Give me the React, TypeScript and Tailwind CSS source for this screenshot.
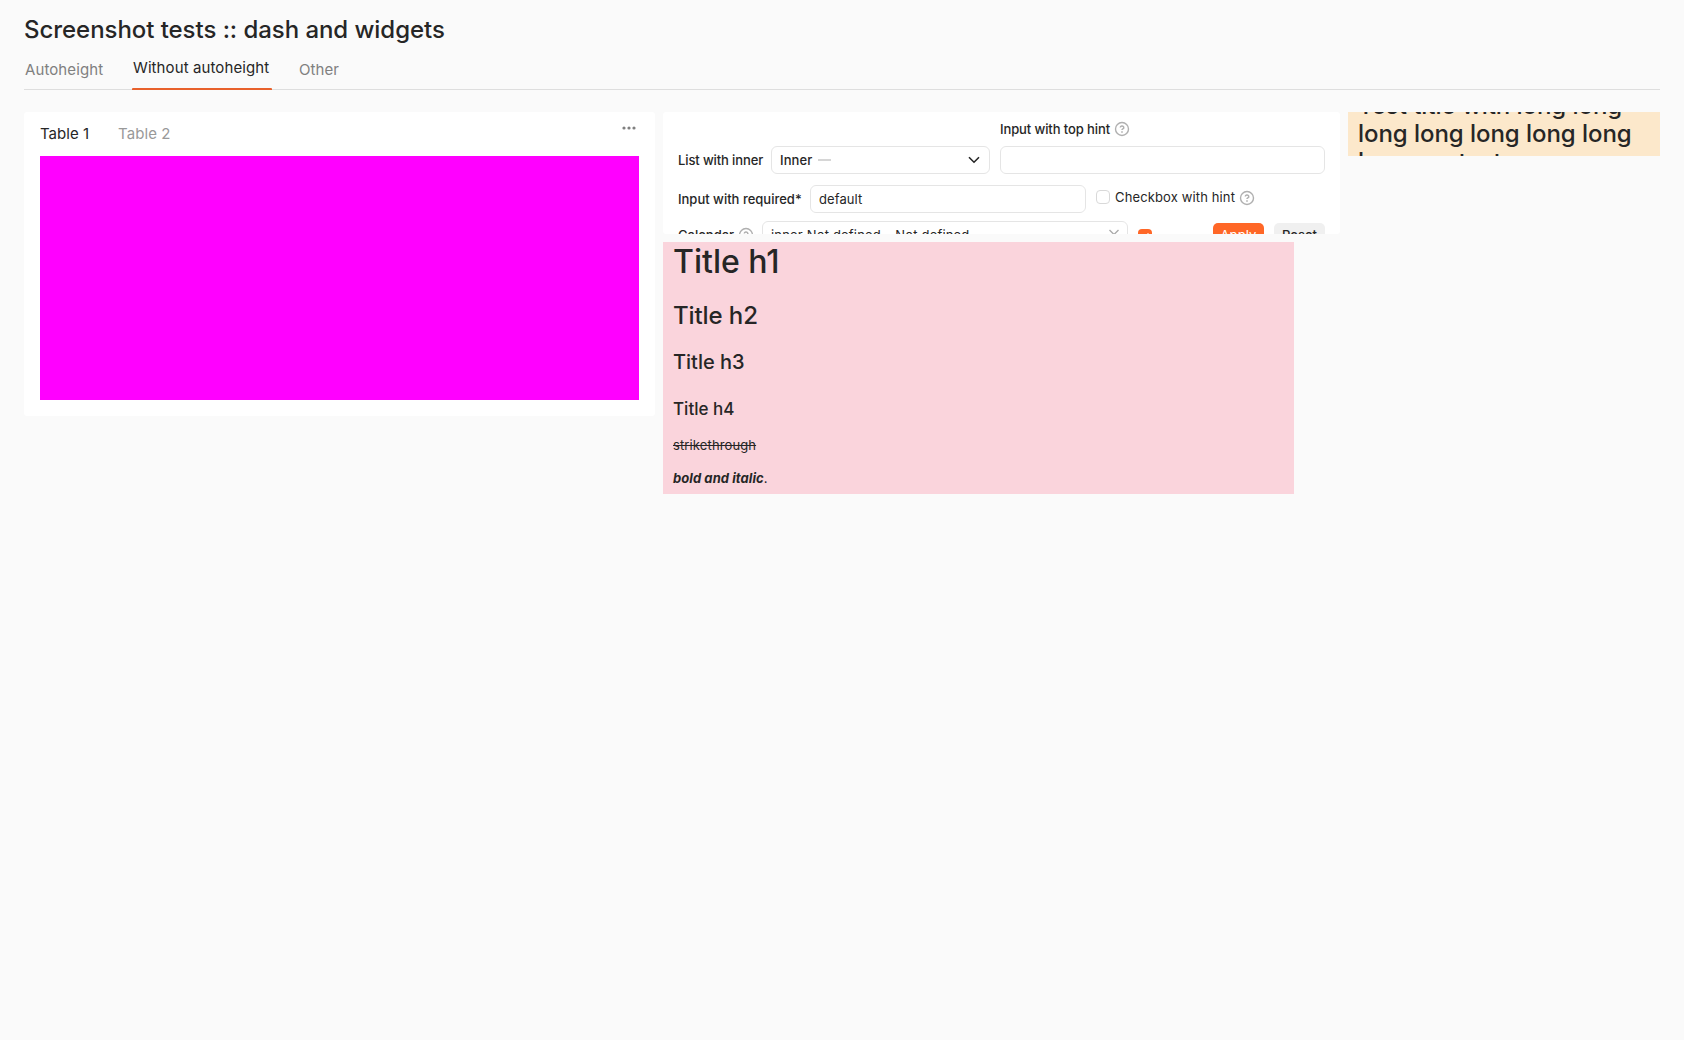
import React from 'react';

function Hint({ className = '' }: { className?: string }) {
  return (
    <svg className={`h-4 w-4 shrink-0 ${className}`} viewBox="0 0 16 16" fill="none" stroke="#b0b0b0" strokeWidth="1.4">
      <circle cx="8" cy="8" r="6.5" />
      <path d="M6.3 6.5a1.75 1.6 0 1 1 2.6 1.4c-.6.35-.9.6-.9 1.2" strokeWidth="1.5" />
      <path d="M8 10.3v1.4" strokeWidth="1.6" />
    </svg>
  );
}

function Chevron({ className = '' }: { className?: string }) {
  return (
    <svg className={`h-[14px] w-[14px] shrink-0 ${className}`} viewBox="0 0 14 14" fill="none" stroke="currentColor" strokeWidth="1.6">
      <path d="M2 4.2 7 9.2 12 4.2" />
    </svg>
  );
}

function TableCard() {
  return (
    <section className="h-[304px] w-[631px] shrink-0 rounded-[3px] bg-white px-4 pb-4">
      <div className="flex h-11 items-start text-[15px] leading-5">
        <span className="mt-3 w-[78px] tracking-[0.02px]">Table 1</span>
        <span className="mt-3 tracking-[0.08px] text-[#999]">Table 2</span>
        <svg className="mt-2 mr-[2px] ml-auto h-4 w-4" viewBox="0 0 16 16" fill="#808080">
          <circle cx="3" cy="8" r="1.6" />
          <circle cx="8" cy="8" r="1.6" />
          <circle cx="13" cy="8" r="1.6" />
        </svg>
      </div>
      <div className="h-[244px] bg-[#ff00ff]" />
    </section>
  );
}

function ControlsCard() {
  return (
    <section className="h-[122px] w-[677px] overflow-hidden rounded-[3px] bg-white px-[15px] text-[13px] leading-[18px]">
      <div className="flex h-[62px] items-end">
        <span className="mb-[5px] w-[93px] font-medium tracking-[-0.12px]">List with inner</span>
        <div className="flex h-7 w-[219px] items-center rounded-md border border-[#e5e5e5] px-2">
          <span className="font-medium tracking-[0.1px]">Inner</span>
          <span className="ml-[6px] h-[2px] w-[13px] bg-[#d6d6d6]" />
          <Chevron className="ml-auto" />
        </div>
        <div className="ml-[10px] flex flex-1 flex-col">
          <div className="mb-2 flex items-center font-medium">
            <span className="tracking-[-0.1px]">Input with top hint</span>
            <Hint className="ml-1" />
          </div>
          <div className="h-7 rounded-md border border-[#e5e5e5]" />
        </div>
      </div>
      <div className="mt-[11px] flex h-7 items-center">
        <span className="w-[132px] font-medium">Input with required*</span>
        <div className="flex h-7 w-[276px] items-center rounded-md border border-[#e5e5e5] pl-2 tracking-[0.08px]">default</div>
        <div className="mb-1 ml-[10px] flex items-center">
          <span className="h-[14px] w-[14px] rounded border border-[#d9d9d9]" />
          <span className="ml-[5px] tracking-[0.13px]">Checkbox with hint</span>
          <Hint className="mt-px ml-1" />
        </div>
      </div>
      <div className="mt-2 flex h-7 items-start">
        <div className="mt-[5px] flex w-[84px] items-center font-medium">
          Calendar
          <Hint className="ml-1" />
        </div>
        <div className="flex h-7 w-[366px] items-center rounded-md border border-[#e5e5e5] pr-[6px] pl-2 tracking-[0.18px]">
          inner Not defined – Not defined
          <svg className="ml-auto h-[14px] w-[14px] shrink-0" viewBox="0 0 14 14" fill="none" stroke="#aaa" strokeWidth="1.4">
            <path d="m2.5 2 9 9m0-9-9 9" />
          </svg>
        </div>
        <span className="mt-2 ml-[10px] flex h-[14px] w-[14px] items-center justify-center rounded bg-[#ff6727]">
          <svg className="h-[10px] w-[10px]" viewBox="0 0 10 10" fill="none" stroke="white" strokeWidth="1.5">
            <path d="m1.5 5 2.5 2.5 4.5-5" />
          </svg>
        </span>
        <span className="mt-[2px] ml-auto flex h-6 w-[51px] items-center justify-center rounded-[5px] bg-[#ff6727] tracking-[0.1px] text-white">Apply</span>
        <span className="mt-[2px] ml-[10px] flex h-6 w-[51px] items-center justify-center rounded-[5px] bg-[#f0f0f0] font-medium">Reset</span>
      </div>
    </section>
  );
}

function MarkdownCard() {
  return (
    <section className="mt-2 h-[252px] w-[631px] overflow-hidden bg-[#fad4dc] pl-[10px] text-[#262626]">
      <h1 className="text-[32px] leading-10 font-medium">Title h1</h1>
      <h2 className="mt-5 text-2xl leading-7 font-medium tracking-[-0.1px]">Title h2</h2>
      <h3 className="mt-5 text-[20px] leading-6 font-medium">Title h3</h3>
      <h4 className="mt-[25px] text-[17px] leading-5 font-medium">Title h4</h4>
      <p className="mt-4 text-[13px] leading-5 tracking-[0.12px] line-through">strikethrough</p>
      <p className="mt-[13px] text-[13px] leading-5">
        <em className="font-bold tracking-[0.08px] italic">bold and italic</em>.
      </p>
    </section>
  );
}

export default function App() {
  return (
    <main className="h-[1040px] overflow-hidden bg-[#fafafa] px-6 font-['Inter',sans-serif] text-[#262626]">
      <h1 className="pt-[14px] text-2xl leading-8 font-medium tracking-[-0.05px]">Screenshot tests :: dash and widgets</h1>
      <nav className="mt-2 flex h-9 items-stretch border-b border-[#dedede] text-[15px] leading-5 text-[#808080]">
        <span className="w-[108px] pt-[6px] pl-px tracking-[0.1px]">Autoheight</span>
        <span className="-mb-px w-[140px] pt-1 pl-px tracking-[0.1px] text-[#262626]">
          Without autoheight
          <span className="mt-[10px] -ml-px block h-[2px] rounded-t-[1px] bg-[#e8612c]" />
        </span>
        <span className="pt-[6px] pl-[27px] tracking-[0.05px]">Other</span>
      </nav>
      <div className="mt-[22px] flex gap-2">
        <TableCard />
        <div className="w-[677px] shrink-0">
          <ControlsCard />
          <MarkdownCard />
        </div>
        <section className="flex h-11 w-[312px] items-center overflow-hidden bg-[#fce8cb] px-[10px] text-2xl leading-7 font-medium tracking-[-0.05px]">
          <p>Test title with long long long long long long long long our text</p>
        </section>
      </div>
    </main>
  );
}
